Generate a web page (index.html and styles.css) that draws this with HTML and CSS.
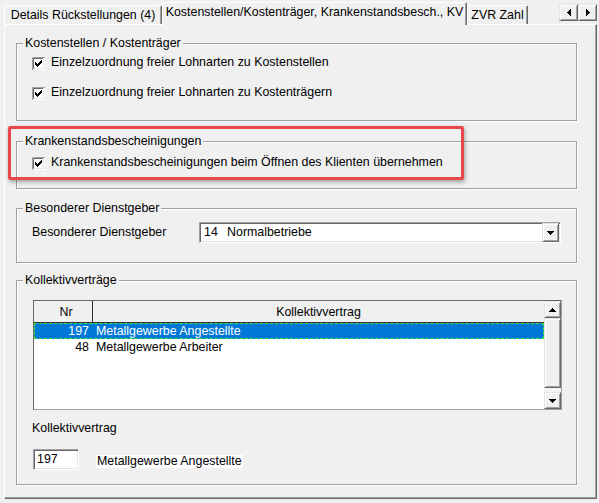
FILE: index.html
```html
<!DOCTYPE html>
<html lang="de">
<head>
  <meta charset="UTF-8">
  <title>Kostenstellen / Kostenträger</title>
  <link rel="stylesheet" href="styles.css">
</head>
<body>
  <div class="dialog">
    <div class="tabstrip">
      <div class="tab tab-details">Details Rückstellungen (4)</div>
      <div class="tab tab-active tab-kost">Kostenstellen/Kostenträger, Krankenstandsbesch., KV</div>
      <div class="tab tab-zvr">ZVR Zahl</div>
      <div class="tab-scroll">
        <span class="btn3d tab-scroll-btn">
          <svg width="4" height="7" viewBox="0 0 4 7"><path d="M3 0h1v7H3V6H2V5H1V4H0V3h1V2h1V1h1z"/></svg>
        </span>
        <span class="btn3d tab-scroll-btn">
          <svg width="4" height="7" viewBox="0 0 4 7"><path d="M0 0h1v1h1v1h1v1h1v1H3v1H2v1H1v1H0z"/></svg>
        </span>
      </div>
    </div>

    <div class="page">
      <!-- Kostenstellen / Kostenträger -->
      <div class="group group-kost">
        <div class="group-title">Kostenstellen / Kostenträger</div>
        <label class="check check-first">
          <svg class="checkbox" width="13" height="13" viewBox="0 0 13 13">
            <rect width="13" height="13" fill="#fff"/>
            <path d="M0.5 13V0.5H13" fill="none" stroke="#a0a0a0"/>
            <path d="M1.5 12V1.5H12" fill="none" stroke="#696969"/>
            <path d="M1.5 11.5H11.5V1" fill="none" stroke="#e3e3e3"/>
            <path d="M3 5h1v1h1v1h1V6h1V5h1V4h1V3h1v3H9v1H8v1H7v1H6v1H5V9H4V8H3z"/>
          </svg>
          <span>Einzelzuordnung freier Lohnarten zu Kostenstellen</span>
        </label>
        <label class="check check-second">
          <svg class="checkbox" width="13" height="13" viewBox="0 0 13 13">
            <rect width="13" height="13" fill="#fff"/>
            <path d="M0.5 13V0.5H13" fill="none" stroke="#a0a0a0"/>
            <path d="M1.5 12V1.5H12" fill="none" stroke="#696969"/>
            <path d="M1.5 11.5H11.5V1" fill="none" stroke="#e3e3e3"/>
            <path d="M3 5h1v1h1v1h1V6h1V5h1V4h1V3h1v3H9v1H8v1H7v1H6v1H5V9H4V8H3z"/>
          </svg>
          <span>Einzelzuordnung freier Lohnarten zu Kostenträgern</span>
        </label>
      </div>

      <!-- Krankenstandsbescheinigungen -->
      <div class="group group-krank">
        <div class="group-title">Krankenstandsbescheinigungen</div>
        <label class="check check-krank">
          <svg class="checkbox" width="13" height="13" viewBox="0 0 13 13">
            <rect width="13" height="13" fill="#fff"/>
            <path d="M0.5 13V0.5H13" fill="none" stroke="#a0a0a0"/>
            <path d="M1.5 12V1.5H12" fill="none" stroke="#696969"/>
            <path d="M1.5 11.5H11.5V1" fill="none" stroke="#e3e3e3"/>
            <path d="M3 5h1v1h1v1h1V6h1V5h1V4h1V3h1v3H9v1H8v1H7v1H6v1H5V9H4V8H3z"/>
          </svg>
          <span>Krankenstandsbescheinigungen beim Öffnen des Klienten übernehmen</span>
        </label>
      </div>

      <!-- Besonderer Dienstgeber -->
      <div class="group group-dg">
        <div class="group-title">Besonderer Dienstgeber</div>
        <div class="field-row">
          <span class="field-label">Besonderer Dienstgeber</span>
          <div class="combo">
            <span class="combo-code">14</span>
            <span>Normalbetriebe</span>
            <span class="btn3d combo-btn">
              <svg width="7" height="4" viewBox="0 0 7 4"><path d="M0 0h7v1H6v1H5v1H4v1H3V3H2V2H1V1H0z"/></svg>
            </span>
          </div>
        </div>
      </div>

      <!-- Kollektivverträge -->
      <div class="group group-kv">
        <div class="group-title">Kollektivverträge</div>
        <div class="listview">
          <div class="list-main">
            <div class="list-header">
              <div class="col-nr">Nr</div>
              <div class="col-name">Kollektivvertrag</div>
            </div>
            <div class="list-row selected">
              <div class="cell-nr">197</div>
              <div class="cell-name">Metallgewerbe Angestellte</div>
            </div>
            <div class="list-row">
              <div class="cell-nr">48</div>
              <div class="cell-name">Metallgewerbe Arbeiter</div>
            </div>
          </div>
          <div class="vscroll">
            <span class="btn3d vscroll-btn">
              <svg width="7" height="4" viewBox="0 0 7 4"><path d="M3 0h1v1h1v1h1v1h1v1H0V3h1V2h1V1h1z"/></svg>
            </span>
            <span class="btn3d vscroll-thumb"></span>
            <span class="vscroll-track"></span>
            <span class="btn3d vscroll-btn">
              <svg width="7" height="4" viewBox="0 0 7 4"><path d="M0 0h7v1H6v1H5v1H4v1H3V3H2V2H1V1H0z"/></svg>
            </span>
          </div>
        </div>

        <div class="kv-label">Kollektivvertrag</div>
        <div class="kv-row">
          <div class="textbox">197</div>
          <span class="kv-name">Metallgewerbe Angestellte</span>
        </div>
      </div>
    </div>

    <div class="highlight"></div>
  </div>
</body>
</html>
```

FILE: styles.css
```css
* {
    box-sizing: border-box;
}

body {
    margin: 0;
    background-color: #f0f0f0;
    font-family: "Liberation Sans", Arial, sans-serif;
    font-size: 12.4px;
    line-height: 15px;
    color: #000;
}

.dialog {
    position: relative;
    width: 599px;
    height: 503px;
    overflow: hidden;
}

/* raised 3d button face */
.btn3d {
    display: flex;
    align-items: center;
    justify-content: center;
    background-color: #f0f0f0;
    border: 1px solid;
    border-color: #e3e3e3 #696969 #696969 #e3e3e3;
    box-shadow: inset 1px 1px 0 #fff, inset -1px -1px 0 #a0a0a0;
}

/* tabs */
.tabstrip {
    display: flex;
    align-items: flex-end;
    height: 24px;
    padding-left: 4px;
}

.tab {
    height: 19px;
    padding-top: 2px;
    text-align: center;
    white-space: nowrap;
    background-color: #f0f0f0;
    border: 1px solid;
    border-bottom: none;
    border-color: #fff #696969 transparent #fff;
    border-radius: 2px 2px 0 0;
    box-shadow: inset -1px 0 0 #a0a0a0;
}

.tab-details {
    width: 158px;
}

.tab-kost {
    width: 305px;
}

.tab-zvr {
    width: 61px;
}

.tab-active {
    position: relative;
    z-index: 1;
    height: 23px;
    margin-bottom: -1px;
}

.tab-scroll {
    display: flex;
    align-self: flex-start;
    margin: 4px 2px 0 auto;
}

.tab-scroll-btn {
    width: 19px;
    height: 17px;
}

/* tab page */
.page {
    margin-left: 4px;
    width: 593px;
    height: 475px;
    padding-left: 11px;
    border: 1px solid;
    border-color: #fff #696969 #696969 #fff;
    box-shadow: inset -1px -1px 0 #a0a0a0;
}

/* etched group box */
.group {
    width: 561px;
    padding: 0 15px;
    border: 1px solid #a0a0a0;
    box-shadow: inset 1px 1px 0 #fff, 1px 1px 0 #fff;
}

.group-title {
    width: fit-content;
    margin: -8px 0 0 -9px;
    padding: 0 2px;
    background-color: #f0f0f0;
}

.group-kost {
    margin-top: 18px;
    height: 78px;
}

.group-krank {
    margin-top: 20px;
    height: 48px;
}

.group-dg {
    margin-top: 19px;
    height: 55px;
}

.group-kv {
    margin-top: 17px;
    height: 205px;
}

/* checkboxes */
.check {
    display: flex;
    align-items: flex-start;
    gap: 6px;
    height: 15px;
}

.checkbox {
    flex: none;
    margin-top: 2px;
}

.check-first {
    margin-top: 4px;
}

.check-second {
    margin-top: 15px;
}

.check-krank {
    margin-top: 6px;
}

/* combobox row */
.field-row {
    display: flex;
    align-items: center;
    margin-top: 6px;
}

.field-label {
    width: 168px;
}

.combo {
    display: flex;
    align-items: center;
    width: 364px;
    height: 21px;
    padding-left: 4px;
    background-color: #fff;
    border: 1px solid;
    border-color: #a0a0a0 #fff #fff #a0a0a0;
    box-shadow: inset 1px 1px 0 #696969, inset -1px -1px 0 #e3e3e3;
}

.combo-code {
    width: 23px;
}

.combo-btn {
    width: 17px;
    height: 19px;
    margin: 0 1px 0 auto;
}

/* list view */
.listview {
    display: flex;
    width: 529px;
    height: 110px;
    margin: 12px 0 0 1px;
    background-color: #fff;
    border: 1px solid;
    border-color: #696969 #a0a0a0 #a0a0a0 #696969;
}

.list-main {
    flex: 1;
}

.list-header {
    display: flex;
    height: 22px;
    background-color: #f0f0f0;
    border-bottom: 1px solid #333;
}

.col-nr {
    width: 59px;
    padding: 4px 0 0 6px;
    text-align: center;
    border-right: 1px solid #333;
}

.col-name {
    flex: 1;
    padding-top: 4px;
    text-align: center;
}

.list-row {
    display: flex;
    height: 16px;
    line-height: 16px;
}

.list-row.selected {
    background-color: #0078d7;
    color: #fff;
    outline: 1px dashed #3be83b;
    outline-offset: -1px;
}

.cell-nr {
    width: 59px;
    padding-right: 4px;
    text-align: right;
}

.cell-name {
    padding-left: 3px;
}

.vscroll {
    display: flex;
    flex-direction: column;
    width: 17px;
    background-color: #f4f4f4;
}

.vscroll-btn {
    height: 17px;
}

.vscroll-thumb {
    height: 70px;
}

.vscroll-track {
    flex: 1;
}

/* selected agreement below the list */
.kv-label {
    margin-top: 11px;
}

.kv-row {
    display: flex;
    align-items: flex-start;
    margin-top: 13px;
}

.textbox {
    width: 46px;
    height: 21px;
    margin-left: 1px;
    padding: 2px 0 0 3px;
    background-color: #fff;
    border: 1px solid;
    border-color: #a0a0a0 #fff #fff #a0a0a0;
    box-shadow: inset 1px 1px 0 #696969, inset -1px -1px 0 #e3e3e3;
}

.kv-name {
    margin: 6px 0 0 17px;
    padding: 0 1px;
    line-height: 13px;
    background-color: #fff;
}

/* red marker round the sick-note option */
.highlight {
    position: absolute;
    left: 8px;
    top: 126px;
    width: 456px;
    height: 54px;
    border: 3px solid #e8474c;
    border-radius: 2px;
    box-shadow: 1px 2px 4px rgba(0, 0, 0, 0.35);
}
```
